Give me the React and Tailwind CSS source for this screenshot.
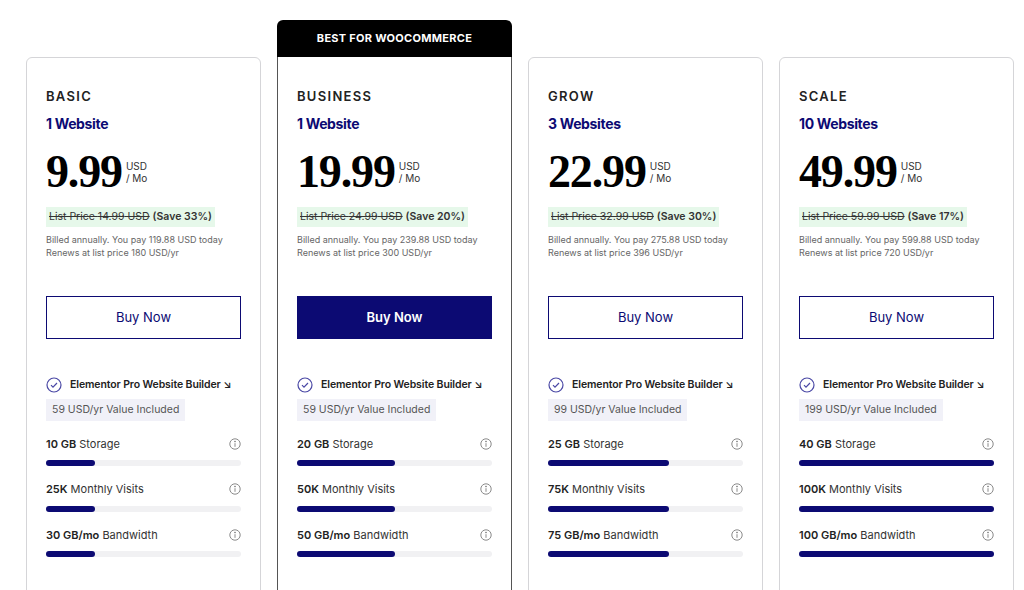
import { useState } from "react";

const plans = [
  { name: "BASIC", sites: "1 Website", price: "9.99", list: "14.99", save: "33%", pay: "119.88", renew: "180", value: "59", storage: "10 GB", visits: "25K", bw: "30 GB/mo", bar: 25 },
  { name: "BUSINESS", sites: "1 Website", price: "19.99", list: "24.99", save: "20%", pay: "239.88", renew: "300", value: "59", storage: "20 GB", visits: "50K", bw: "50 GB/mo", bar: 50, featured: true },
  { name: "GROW", sites: "3 Websites", price: "22.99", list: "32.99", save: "30%", pay: "275.88", renew: "396", value: "99", storage: "25 GB", visits: "75K", bw: "75 GB/mo", bar: 62 },
  { name: "SCALE", sites: "10 Websites", price: "49.99", list: "59.99", save: "17%", pay: "599.88", renew: "720", value: "199", storage: "40 GB", visits: "100K", bw: "100 GB/mo", bar: 100 },
];

function Info() {
  return (
    <svg width="12" height="12" viewBox="0 0 12 12" fill="none" stroke="#8a8a8a" strokeWidth="1">
      <circle cx="6" cy="6" r="5.2" />
      <line x1="6" y1="5.2" x2="6" y2="8.8" />
      <circle cx="6" cy="3.5" r="0.5" fill="#8a8a8a" />
    </svg>
  );
}

function Meter({ bold, label, bar }) {
  return (
    <div className="mt-[15px]">
      <div className="flex justify-between items-center text-[11px] text-[#333]">
        <span>
          <b className="font-semibold text-[#222]">{bold}</b> {label}
        </span>
        <Info />
      </div>
      <div className="mt-[8px] h-[6px] rounded-full bg-[#f1f1f3]">
        <div className="h-[6px] rounded-full bg-[#0c0a73]" style={{ width: bar + "%" }} />
      </div>
    </div>
  );
}

function Card({ p }) {
  return (
    <div className={"w-[235px] shrink-0 flex flex-col " + (p.featured ? "" : "pt-[37px]")}>
      {p.featured && (
        <div className="h-[37px] bg-black rounded-t-md flex items-center justify-center text-white text-[11px] font-bold tracking-wide">
          BEST FOR WOOCOMMERCE
        </div>
      )}
      <div
        className={
          "flex-1 bg-white px-[19px] pb-6 border " +
          (p.featured ? "border-[#555] border-t-0 pt-[30px]" : "border-[#d5d5d8] rounded-t-md pt-[29px]")
        }
      >
        <div className="text-[13px] leading-[18px] font-semibold tracking-[0.1em] text-[#222]">{p.name}</div>
        <div className="mt-[10px] text-[14px] leading-[18px] font-bold text-[#0c0a73] tracking-tight">{p.sites}</div>
        <div className="mt-[16px] flex items-center">
          <span className="text-[46px] font-bold leading-none text-black tracking-tight" style={{ fontFamily: '"Liberation Serif", "DejaVu Serif", serif' }}>
            {p.price}
          </span>
          <span className="ml-[4px] text-[10px] leading-[12px] text-[#333]">
            USD
            <br />/ Mo
          </span>
        </div>
        <div className="mt-[12px] inline-block bg-[#e6f8ea] px-[3px] py-[2px] text-[10.5px] text-[#333]">
          <span className="line-through">List Price {p.list} USD</span> <b className="font-semibold">(Save {p.save})</b>
        </div>
        <div className="mt-[6px] text-[9px] leading-[13px] text-[#666]">
          Billed annually. You pay {p.pay} USD today
          <br />
          Renews at list price {p.renew} USD/yr
        </div>
        <button
          className={
            "mt-[37px] w-full h-[43px] text-[13px] border border-[#0c0a73] " +
            (p.featured ? "bg-[#0c0a73] text-white font-semibold" : "bg-white text-[#0c0a73]")
          }
        >
          Buy Now
        </button>
        <div className="mt-[38px] flex items-center gap-[8px] whitespace-nowrap">
          <svg width="16" height="16" viewBox="0 0 16 16" fill="none" stroke="#4a48a5" strokeWidth="1.2" className="shrink-0">
            <circle cx="8" cy="8" r="7" />
            <path d="M5 8.2l2 2 4-4.2" />
          </svg>
          <span className="text-[10.5px] font-semibold text-[#222] tracking-[-0.01em]">Elementor Pro Website Builder ↘</span>
        </div>
        <div className="mt-[6px] inline-block bg-[#f1f1f8] px-[6px] py-[3px] text-[10.5px] text-[#555]">
          {p.value} USD/yr Value Included
        </div>
        <div className="mt-[7px]">
          <Meter bold={p.storage} label="Storage" bar={p.bar} />
          <Meter bold={p.visits} label="Monthly Visits" bar={p.bar} />
          <Meter bold={p.bw} label="Bandwidth" bar={p.bar} />
        </div>
      </div>
    </div>
  );
}

export default function App() {
  const [list] = useState(plans);
  return (
    <div className="w-[1024px] h-[590px] overflow-hidden bg-white pt-[20px] pl-[26px]" style={{ fontFamily: 'Inter, "Liberation Sans", sans-serif' }}>
      <div className="flex gap-[16px] items-stretch h-[600px]">
        {list.map((p) => (
          <Card key={p.name} p={p} />
        ))}
      </div>
    </div>
  );
}
